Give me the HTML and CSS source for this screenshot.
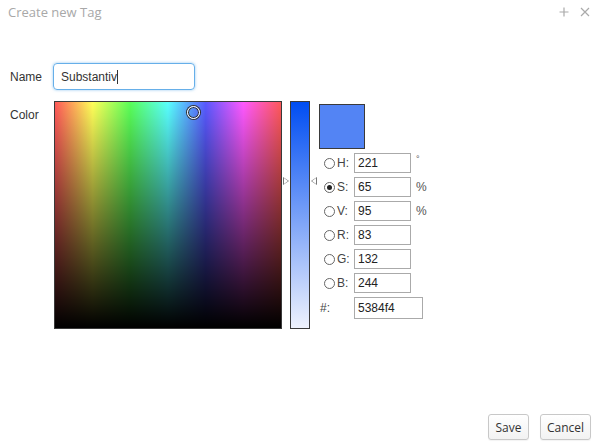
FILE: index.html
```html
<!DOCTYPE html>
<html>
<head>
<meta charset="utf-8">
<link rel="stylesheet" href="styles.css">
</head>
<body>
<div class="dialog">
  <div class="header">
    <span class="title">Create new Tag</span>
    <span class="tools">
      <svg width="10" height="10" viewBox="0 0 10 10"><path d="M5 0.5V9.5M0.5 5H9.5" stroke="#aaa" stroke-width="1.2"/></svg>
      <svg width="10" height="10" viewBox="0 0 10 10"><path d="M1 1L9 9M9 1L1 9" stroke="#aaa" stroke-width="1.2"/></svg>
    </span>
  </div>
  <div class="content">
    <div class="row name-row">
      <label class="lbl">Name</label>
      <div class="name-input">Substantiv<span class="caret"></span></div>
    </div>
    <div class="row color-row">
      <label class="lbl lbl-color">Color</label>
      <div class="picker">
        <div class="field">
          <div class="field-dark"></div>
          <div class="marker"></div>
        </div>
        <div class="slider">
          <span class="arrow arrow-l"></span>
          <span class="arrow arrow-r"></span>
        </div>
        <div class="panel">
          <div class="swatch"></div>
          <div class="fields">
            <div class="frow"><span class="radio"></span><span class="fl">H:</span><span class="inp">221</span><span class="unit deg">°</span></div>
            <div class="frow"><span class="radio on"></span><span class="fl">S:</span><span class="inp">65</span><span class="unit">%</span></div>
            <div class="frow"><span class="radio"></span><span class="fl">V:</span><span class="inp">95</span><span class="unit">%</span></div>
            <div class="frow"><span class="radio"></span><span class="fl">R:</span><span class="inp">83</span></div>
            <div class="frow"><span class="radio"></span><span class="fl">G:</span><span class="inp">132</span></div>
            <div class="frow"><span class="radio"></span><span class="fl">B:</span><span class="inp">244</span></div>
            <div class="frow hexrow"><span class="hl">#:</span><span class="inp hex">5384f4</span></div>
          </div>
        </div>
      </div>
    </div>
  </div>
  <div class="footer">
    <button class="btn btn-save">Save</button>
    <button class="btn btn-cancel">Cancel</button>
  </div>
</div>
</body>
</html>
```
FILE: styles.css
```css
* { box-sizing: border-box; }
html, body { margin: 0; padding: 0; background: #fff; }
body { width: 600px; height: 448px; overflow: hidden; font-family: "Liberation Sans", Arial, sans-serif; font-size: 12px; color: #333; }
.dialog { display: flex; flex-direction: column; height: 448px; }
.header { height: 26px; display: flex; align-items: center; justify-content: space-between; padding: 0 10px 2px 8px; }
.title { font-family: "Open Sans", sans-serif; font-size: 13px; color: #a8a8a8; }
.tools { display: flex; gap: 11px; align-items: center; }
.content { flex: 1; padding-top: 37px; }
.row { display: flex; }
.lbl { width: 53px; padding-left: 10px; }
.name-row { align-items: center; height: 27px; }
.name-input { width: 142px; height: 27px; border: 1px solid #66afe9; border-radius: 4px; box-shadow: 0 0 3px rgba(102,175,233,0.7); padding: 0 7px; display: flex; align-items: center; font-size: 12px; color: #333; }
.caret { display: inline-block; width: 1px; height: 14px; background: #333; }
.color-row { margin-top: 11px; }
.lbl-color { padding-top: 7px; width: 54px; }
.picker { display: flex; }
.field { position: relative; width: 228px; height: 228px; border: 1px solid #3a3a3a;
  background: linear-gradient(to right, #ff5959 0%, #ffff59 16.67%, #59ff59 33.33%, #59ffff 50%, #5959ff 66.67%, #ff59ff 83.33%, #ff5959 100%); }
.field-dark { position: absolute; inset: 0; background: linear-gradient(to bottom, rgba(0,0,0,0), #000); }
.marker { position: absolute; left: 132px; top: 4px; width: 13px; height: 13px; border-radius: 50%; border: 1.5px solid #fff; box-shadow: 0 0 0 1px #333, inset 0 0 0 1px #333; }
.slider { position: relative; width: 20px; height: 228px; margin-left: 8px; border: 1px solid #3a3a3a; background: linear-gradient(to bottom, #004df2, #eef2fd); }
.arrow { position: absolute; top: 75px; width: 0; height: 0; border-top: 4px solid transparent; border-bottom: 4px solid transparent; }
.arrow::after { content: ""; position: absolute; top: -3px; border-top: 3px solid transparent; border-bottom: 3px solid transparent; }
.arrow-l { left: -8px; border-left: 6px solid #777; }
.arrow-l::after { left: -5px; border-left: 4px solid #fff; }
.arrow-r { right: -8px; border-right: 6px solid #777; }
.arrow-r::after { right: -5px; border-right: 4px solid #fff; }
.panel { margin-left: 9px; padding-top: 3px; }
.swatch { width: 46px; height: 45px; background: #5384f4; border: 1px solid #3a3a3a; }
.fields { margin-top: 4px; }
.frow { display: flex; align-items: center; height: 20px; margin-bottom: 4px; position: relative; }
.radio { width: 11px; height: 11px; border: 1px solid #666; border-radius: 50%; margin-left: 5px; display: flex; align-items: center; justify-content: center; }
.radio.on::after { content: ""; width: 5px; height: 5px; border-radius: 50%; background: #222; }
.fl { width: 19px; padding-left: 2px; font-size: 12px; color: #444; }
.inp { width: 57px; height: 20px; border: 1px solid #aaa; padding-left: 3px; display: flex; align-items: center; font-size: 12px; color: #222; }
.unit { margin-left: 5px; font-size: 12px; color: #555; }
.unit.deg { font-size: 9px; align-self: flex-start; margin-top: 1px; }
.hexrow { height: 22px; margin-top: 1px; }
.hl { width: 35px; padding-left: 1px; color: #444; }
.inp.hex { width: 69px; height: 22px; }
.footer { display: flex; justify-content: flex-end; gap: 11px; padding: 0 9px 8px 0; }
.btn { font-family: "Open Sans", sans-serif; font-size: 12px; color: #333; height: 26px; padding: 0; border: 1px solid #c8c8c8; border-radius: 3px; background: linear-gradient(#fff, #f2f2f2); box-shadow: 0 1px 1px rgba(0,0,0,0.05); }
.btn-save { width: 41px; }
.btn-cancel { width: 51px; }
```
